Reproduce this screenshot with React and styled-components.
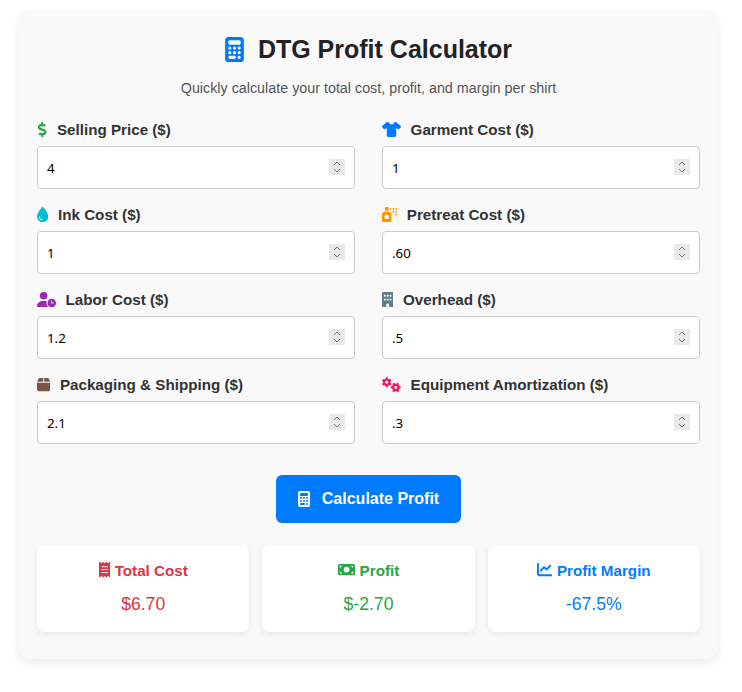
import React from 'react';
import styled, { createGlobalStyle } from 'styled-components';
import { FaDollarSign } from 'react-icons/fa';
import {
  FaCalculator, FaShirt, FaDroplet, FaSprayCan, FaUserClock,
  FaBuilding, FaBox, FaGears, FaReceipt, FaMoneyBill, FaChartLine,
} from 'react-icons/fa6';

const Global = createGlobalStyle`
  html, body { margin: 0; padding: 0; background: #fff; }
  body { font-family: "Liberation Sans", Arial, sans-serif; }
`;

const Page = styled.div`
  width: 742px;
  padding: 10px 24px 33px 18px;
  box-sizing: border-box;
`;

const Card = styled.main`
  width: 700px;
  box-sizing: border-box;
  padding: 20px 18px 27px 19px;
  background: #f9f9f9;
  border-radius: 12px;
  box-shadow: 0 4px 10px rgba(0, 0, 0, 0.08);
`;

const Title = styled.h1`
  margin: 0;
  display: flex;
  justify-content: center;
  align-items: center;
  gap: 14px;
  font-size: 25px;
  line-height: 38px;
  font-weight: 700;
  color: #222;
  svg { color: #007bff; height: 25px; width: 19px; }
`;

const Subtitle = styled.p`
  margin: 12px 0 24px;
  text-align: center;
  font-size: 14.32px;
  line-height: 17px;
  color: #555;
`;

const Fields = styled.div`
  display: grid;
  grid-template-columns: 318px 318px;
  column-gap: 27px;
  row-gap: 17px;
`;

const Field = styled.div`
  display: flex;
  flex-direction: column;
`;

const Label = styled.label`
  display: flex;
  align-items: center;
  gap: 9.6px;
  height: 17px;
  margin-bottom: 8px;
  font-size: 15.2px;
  font-weight: 700;
  color: #333;
  svg { color: ${p => p.$tint}; height: 1em; width: ${p => p.$iconRatio}em; flex: none; }
`;

const Box = styled.div`
  position: relative;
  height: 43px;
  box-sizing: border-box;
  border: 1px solid #ccc;
  border-radius: 4px;
  background: #fff;
`;

const Input = styled.input`
  width: 100%;
  height: 100%;
  box-sizing: border-box;
  padding: 1px 40px 0 9px;
  border: 0;
  outline: 0;
  background: transparent;
  font-family: "Noto Sans", "Open Sans", sans-serif;
  font-size: 13.33px;
  color: #000;
`;

const Spin = styled.span`
  position: absolute;
  right: 9px;
  top: 12px;
  width: 16px;
  height: 16px;
  background: #e9e9e9;
  display: flex;
  align-items: center;
  justify-content: center;
`;

const Action = styled.div`
  display: flex;
  justify-content: center;
  margin-top: 31px;
`;

const Button = styled.button`
  display: flex;
  align-items: center;
  gap: 12px;
  width: 185px;
  height: 48px;
  justify-content: center;
  border: 0;
  border-radius: 6px;
  background: #007bff;
  color: #fff;
  font-family: inherit;
  font-size: 16px;
  font-weight: 700;
  svg { height: 16px; width: 12px; }
`;

const Results = styled.div`
  display: grid;
  grid-template-columns: repeat(3, 1fr);
  gap: 13px;
  margin-top: 22px;
`;

const Result = styled.div`
  height: 87px;
  box-sizing: border-box;
  padding: 16px 10px 0;
  background: #fff;
  border-radius: 8px;
  box-shadow: 0 2px 6px rgba(0, 0, 0, 0.08);
  text-align: center;
  color: ${p => p.$tint};
`;

const ResultLabel = styled.div`
  display: flex;
  justify-content: center;
  align-items: center;
  gap: 4.8px;
  height: 18px;
  font-size: 15.2px;
  font-weight: 700;
  svg { height: 1em; width: ${p => p.$iconRatio}em; }
`;

const ResultValue = styled.div`
  margin-top: 15px;
  font-size: 17.6px;
  line-height: 20px;
`;

const Chevrons = () => (
  <svg width="10" height="14" viewBox="0 0 10 14" fill="none" stroke="#777" strokeWidth="1">
    <path d="M2 5 L5 2 L8 5" />
    <path d="M2 9 L5 12 L8 9" />
  </svg>
);

const fields = [
  ['Selling Price ($)', '4', FaDollarSign, '#28a745', 0.68],
  ['Garment Cost ($)', '1', FaShirt, '#007bff', 1.25],
  ['Ink Cost ($)', '1', FaDroplet, '#00bcd4', 0.75],
  ['Pretreat Cost ($)', '.60', FaSprayCan, '#ff9800', 1],
  ['Labor Cost ($)', '1.2', FaUserClock, '#9c27b0', 1.25],
  ['Overhead ($)', '.5', FaBuilding, '#607d8b', 0.75],
  ['Packaging & Shipping ($)', '2.1', FaBox, '#795548', 0.875],
  ['Equipment Amortization ($)', '.3', FaGears, '#e91e63', 1.25],
];

const results = [
  ['Total Cost', '$6.70', FaReceipt, '#dc3545', 0.75],
  ['Profit', '$-2.70', FaMoneyBill, '#28a745', 1.125],
  ['Profit Margin', '-67.5%', FaChartLine, '#007bff', 1],
];

export default function App() {
  return (
    <Page>
      <Global />
      <Card>
        <Title><FaCalculator />DTG Profit Calculator</Title>
        <Subtitle>Quickly calculate your total cost, profit, and margin per shirt</Subtitle>
        <Fields>
          {fields.map(([label, value, Icon, tint, iconRatio]) => (
            <Field key={label}>
              <Label $tint={tint} $iconRatio={iconRatio}><Icon />{label}</Label>
              <Box>
                <Input type="text" defaultValue={value} />
                <Spin><Chevrons /></Spin>
              </Box>
            </Field>
          ))}
        </Fields>
        <Action>
          <Button><FaCalculator />Calculate Profit</Button>
        </Action>
        <Results>
          {results.map(([label, value, Icon, tint, iconRatio]) => (
            <Result key={label} $tint={tint}>
              <ResultLabel $iconRatio={iconRatio}><Icon />{label}</ResultLabel>
              <ResultValue>{value}</ResultValue>
            </Result>
          ))}
        </Results>
      </Card>
    </Page>
  );
}
